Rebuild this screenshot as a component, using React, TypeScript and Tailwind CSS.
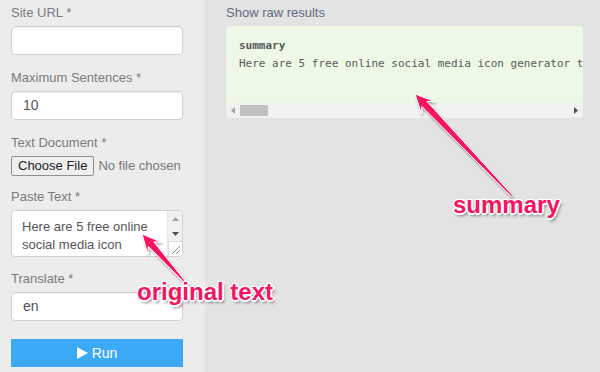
import React from 'react';

const font = "font-['Liberation_Sans',Arial,sans-serif]";

function arrowPoints(x1: number, y1: number, x2: number, y2: number) {
  const dx = x2 - x1;
  const dy = y2 - y1;
  const len = Math.hypot(dx, dy);
  const ux = dx / len;
  const uy = dy / len;
  const nx = -uy;
  const ny = ux;
  const headLen = 19;
  const p = (x: number, y: number) => `${x.toFixed(1)},${y.toFixed(1)}`;
  const neckX = x2 - ux * headLen * 0.72;
  const neckY = y2 - uy * headLen * 0.72;
  const baseX = x2 - ux * headLen;
  const baseY = y2 - uy * headLen;
  return [
    p(x1 + nx * 0.9, y1 + ny * 0.9),
    p(neckX + nx * 3.6, neckY + ny * 3.6),
    p(baseX + nx * 9, baseY + ny * 9),
    p(x2, y2),
    p(baseX - nx * 9, baseY - ny * 9),
    p(neckX - nx * 3.6, neckY - ny * 3.6),
    p(x1 - nx * 0.9, y1 - ny * 0.9),
  ].join(' ');
}

function Label({ children }: { children: React.ReactNode }) {
  return <div className="h-[18px] leading-[18px] text-[13px] text-[#7b7b7b] mb-[4px]">{children}</div>;
}

function TextInput({ value }: { value?: string }) {
  return (
    <div className="h-[29px] w-[172px] rounded-[4px] border border-[#d0d0d0] bg-white px-[11px] flex items-center text-[14px] text-[#555] shadow-[inset_0_1px_1px_rgba(0,0,0,0.06)]">
      {value}
    </div>
  );
}

function Tri({ dir, color }: { dir: 'up' | 'down' | 'left' | 'right'; color: string }) {
  const pts = {
    up: '0,4 3.5,0 7,4',
    down: '0,0 7,0 3.5,4',
    left: '4,0 4,7 0,3.5',
    right: '0,0 0,7 4,3.5',
  }[dir];
  const w = dir === 'up' || dir === 'down' ? 7 : 4;
  const h = dir === 'up' || dir === 'down' ? 4 : 7;
  return (
    <svg width={w} height={h} viewBox={`0 0 ${w} ${h}`}>
      <polygon points={pts} fill={color} />
    </svg>
  );
}

export default function App() {
  return (
    <div className={`relative flex w-[600px] h-[372px] overflow-hidden ${font}`}>
      {/* form column */}
      <div className="w-[205px] shrink-0 bg-[#ececec] pl-[11px] pt-[4px] flex flex-col">
        <Label>Site URL *</Label>
        <TextInput />

        <div className="mt-[14px]">
          <Label>Maximum Sentences *</Label>
          <TextInput value="10" />
        </div>

        <div className="mt-[14px]">
          <Label>Text Document *</Label>
          <div className="flex items-center h-[20px] text-[13px]">
            <div className="h-[20px] px-[6px] flex items-center rounded-[2px] border border-[#8f8f8f] bg-[#efefef] text-[#222]">
              Choose File
            </div>
            <span className="ml-[4px] text-[#777]">No file chosen</span>
          </div>
        </div>

        <div className="mt-[12px]">
          <Label>Paste Text *</Label>
          <div className="flex h-[47px] w-[172px] rounded-[4px] border border-[#d0d0d0] bg-white overflow-hidden">
            <div className="flex-1 pl-[10px] pt-[7px] text-[13px] leading-[18px] text-[#555]">
              Here are 5 free online social media icon generator tools
            </div>
            <div className="w-[15px] flex flex-col bg-[#f1f1f1] border-l border-[#e6e6e6]">
              <div className="h-[15px] flex items-center justify-center">
                <Tri dir="up" color="#a3a3a3" />
              </div>
              <div className="h-[15px] flex items-center justify-center">
                <Tri dir="down" color="#505050" />
              </div>
              <div className="flex-1 bg-white border-t border-l border-[#dcdcdc] flex items-end justify-end p-[2px]">
                <svg width="9" height="9" viewBox="0 0 9 9">
                  <line x1="1" y1="9" x2="9" y2="1" stroke="#8a8a8a" strokeWidth="1" />
                  <line x1="5" y1="9" x2="9" y2="5" stroke="#8a8a8a" strokeWidth="1" />
                </svg>
              </div>
            </div>
          </div>
        </div>

        <div className="mt-[13px]">
          <Label>Translate *</Label>
          <TextInput value="en" />
        </div>

        <button className="mt-[18px] h-[28px] w-[172px] bg-[#3ba9f5] text-white text-[14px] flex items-center justify-center gap-[4px]">
          <svg width="11" height="12" viewBox="0 0 11 12">
            <polygon points="0,0 11,6 0,12" fill="#fff" />
          </svg>
          Run
        </button>
      </div>

      {/* results column */}
      <div className="flex-1 bg-[#e3e3e3] pl-[21px] pt-[4px]">
        <div className="h-[18px] leading-[18px] text-[13px] text-[#5c6b7e] mb-[4px]">Show raw results</div>
        <div className="w-[357px] h-[92px] rounded-[4px] bg-[#edf8e7] flex flex-col overflow-hidden">
          <div className="flex-1 pl-[13px] pt-[11px] font-['DejaVu_Sans_Mono',monospace] text-[11px] leading-[18px] text-[#5a5a5a] whitespace-nowrap overflow-hidden">
            <div className="font-bold">summary</div>
            <div>Here are 5 free online social media icon generator tools to</div>
          </div>
          <div className="h-[15px] bg-[#f1f1f1] flex items-center">
            <div className="w-[14px] flex items-center justify-center">
              <Tri dir="left" color="#a3a3a3" />
            </div>
            <div className="w-[28px] h-[11px] bg-[#c1c1c1]" />
            <div className="flex-1" />
            <div className="w-[14px] flex items-center justify-center">
              <Tri dir="right" color="#505050" />
            </div>
          </div>
        </div>
      </div>

      {/* annotations */}
      <svg className="absolute inset-0 pointer-events-none" width="600" height="372" viewBox="0 0 600 372">
        <defs>
          <filter id="sh" x="-20%" y="-20%" width="140%" height="140%">
            <feDropShadow dx="1" dy="2" stdDeviation="1.2" floodColor="#000" floodOpacity="0.35" />
          </filter>
        </defs>
        <polygon points={arrowPoints(512, 196, 415, 94)} fill="#f5145f" stroke="#fff" strokeWidth="1" filter="url(#sh)" />
        <polygon points={arrowPoints(184, 281, 142, 234)} fill="#f5145f" stroke="#fff" strokeWidth="1" filter="url(#sh)" />
      </svg>
      <div className="absolute left-[453px] top-[193px] text-[24px] leading-none font-bold text-[#f5145f] [text-shadow:1px_1px_0_#fff,-1px_-1px_0_#fff,1px_-1px_0_#fff,-1px_1px_0_#fff,0_2px_0_#fff,2px_0_0_#fff,2px_3px_3px_rgba(0,0,0,0.45)]">
        summary
      </div>
      <div className="absolute left-[137px] top-[280px] text-[24px] leading-none font-bold text-[#f5145f] [text-shadow:1px_1px_0_#fff,-1px_-1px_0_#fff,1px_-1px_0_#fff,-1px_1px_0_#fff,0_2px_0_#fff,2px_0_0_#fff,2px_3px_3px_rgba(0,0,0,0.45)]">
        original text
      </div>
    </div>
  );
}
